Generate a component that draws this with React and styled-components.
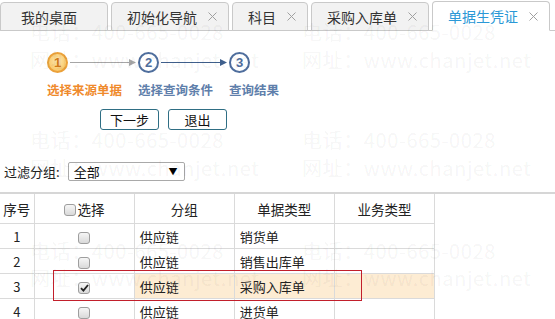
import React from "react";
import styled, { createGlobalStyle } from "styled-components";

const Global = createGlobalStyle`
  html, body { margin: 0; padding: 0; background: #fff; }
  body { font-family: "Noto Sans CJK SC", "Noto Sans", sans-serif; color: #222; }
`;

const Page = styled.div`
  position: relative;
  width: 555px;
  height: 319px;
  overflow: hidden;
  background: #fff;
`;

const TabBar = styled.div`
  display: flex;
  align-items: flex-end;
  gap: 3px;
  height: 30px;
  border-bottom: 1px solid #c9c9c9;
`;

const Tab = styled.div`
  box-sizing: border-box;
  height: ${(p) => (p.$active ? 30 : 29)}px;
  margin-bottom: -1px;
  display: flex;
  align-items: center;
  padding: ${(p) => (p.$plain ? "0 30px 0 20px" : "0 10px 0 15px")};
  border: 1px solid #c9c9c9;
  border-bottom: 1px solid ${(p) => (p.$active ? "#fff" : "#c9c9c9")};
  border-radius: 4px 4px 0 0;
  background: ${(p) => (p.$active ? "#fff" : "#f2f2f2")};
  font-size: 14px;
  color: ${(p) => (p.$active ? "#2b98d6" : "#333")};
  white-space: nowrap;
`;

const Close = styled.svg`
  width: 11px;
  height: 11px;
  margin-left: 10px;
  flex: none;
`;

const Steps = styled.div`
  display: flex;
  padding: 21px 0 0 47px;
`;

const StepItem = styled.div`
  width: 91px;
  display: flex;
  flex-direction: column;
`;

const StepTop = styled.div`
  display: flex;
  align-items: center;
  height: 21px;
`;

const Circle = styled.div`
  box-sizing: border-box;
  width: 21px;
  height: 21px;
  border-radius: 50%;
  flex: none;
  display: flex;
  align-items: center;
  justify-content: center;
  font-family: "Liberation Sans", Arial, sans-serif;
  font-size: 13px;
  font-weight: bold;
  border: 2px solid ${(p) => (p.$current ? "#eba13a" : "#4f6e9d")};
  background: ${(p) =>
    p.$current ? "radial-gradient(circle at 50% 40%, #fde8b0, #f7bd52)" : "#fff"};
  color: ${(p) => (p.$current ? "#d07a18" : "#4f6e9d")};
`;

const Arrow = styled.svg`
  width: 66px;
  height: 9px;
  margin-left: 2px;
  flex: none;
`;

const StepLabel = styled.div`
  margin-top: 8px;
  font-size: 12.5px;
  font-weight: bold;
  line-height: 18px;
  white-space: nowrap;
  color: ${(p) => (p.$current ? "#ef8a2c" : "#5f7fab")};
`;

const Buttons = styled.div`
  display: flex;
  gap: 9px;
  padding: 10px 0 0 100px;
`;

const Button = styled.button`
  box-sizing: border-box;
  width: 59px;
  height: 21px;
  padding: 0;
  border: 1px solid #2f6e84;
  border-radius: 3px;
  background: #fff;
  font-family: "Noto Sans CJK SC", sans-serif;
  font-size: 13px;
  line-height: 19px;
  color: #111;
`;

const FilterRow = styled.div`
  display: flex;
  align-items: center;
  gap: 8px;
  margin-top: 32px;
  padding-left: 4px;
  font-size: 13px;
`;

const Select = styled.div`
  box-sizing: border-box;
  width: 117px;
  height: 19px;
  border: 1px solid #a9a9a9;
  border-radius: 2px;
  display: flex;
  align-items: center;
  justify-content: space-between;
  padding: 0 6px 0 5px;
  font-size: 13px;
  color: #111;
`;

const Caret = styled.span`
  font-size: 9px;
  color: #000;
`;

const TableWrap = styled.div`
  margin-top: 11px;
  border-top: 2px solid #d6d6d6;
`;

const Table = styled.table`
  border-collapse: collapse;
  table-layout: fixed;
  width: 435px;
  font-size: 13px;
`;

const Th = styled.th`
  height: 29px;
  padding: 0;
  border: 1px solid #dadada;
  border-top: none;
  font-weight: normal;
  font-size: 13.5px;
  color: #222;
  text-align: center;
  &:first-child { border-left: none; }
`;

const Td = styled.td`
  height: 24px;
  padding: 0 0 0 ${(p) => (p.$left ? 5 : 0)}px;
  border: 1px solid #dadada;
  text-align: ${(p) => (p.$left ? "left" : "center")};
  background: ${(p) => (p.$hl ? "#fdecd3" : "transparent")};
  color: #222;
  &:first-child { border-left: none; }
`;

const Check = styled.span`
  box-sizing: border-box;
  display: inline-flex;
  align-items: center;
  justify-content: center;
  width: 12px;
  height: 12px;
  border: 1px solid #9e9e9e;
  border-radius: 3px;
  background: linear-gradient(#f6f6f6, #d9d9d9);
  vertical-align: middle;
  margin-right: ${(p) => (p.$withText ? 2 : 0)}px;
`;

const HeadLabel = styled.span`
  vertical-align: middle;
`;

const Watermark = styled.div`
  position: absolute;
  left: ${(p) => p.$x}px;
  top: ${(p) => p.$y}px;
  font-size: 20px;
  line-height: 26px;
  letter-spacing: 0.6px;
  color: rgba(0, 0, 0, 0.055);
  white-space: nowrap;
  pointer-events: none;
`;

const Annotation = styled.div`
  position: absolute;
  left: 53px;
  top: 270px;
  width: 307px;
  height: 29px;
  border: 1px solid #c21f2b;
  pointer-events: none;
`;

const tabs = [
  { t: "我的桌面", plain: true },
  { t: "初始化导航" },
  { t: "科目" },
  { t: "采购入库单" },
  { t: "单据生凭证", active: true },
];

const rows = [
  { n: 1, g: "供应链", d: "销货单" },
  { n: 2, g: "供应链", d: "销售出库单" },
  { n: 3, g: "供应链", d: "采购入库单", checked: true },
  { n: 4, g: "供应链", d: "进货单" },
];

const steps = [
  { n: 1, label: "选择来源单据", current: true, arrow: "#a6a6a6" },
  { n: 2, label: "选择查询条件", arrow: "#3f5f8c" },
  { n: 3, label: "查询结果" },
];

function CloseIcon() {
  return (
    <Close viewBox="0 0 11 11">
      <path d="M1.5 1.5 L9.5 9.5 M9.5 1.5 L1.5 9.5" stroke="#a0a0a0" strokeWidth="1" />
    </Close>
  );
}

function CheckMark() {
  return (
    <svg width="9" height="8" viewBox="0 0 9 8">
      <path d="M1 4.2 L3.4 6.6 L8 1" fill="none" stroke="#222" strokeWidth="1.8" />
    </svg>
  );
}

export default function App() {
  const marks = [
    [30, 19, "电话：400-665-0028"],
    [30, 47, "网址：www.chanjet.net"],
    [302, 19, "电话：400-665-0028"],
    [302, 47, "网址：www.chanjet.net"],
    [30, 127, "电话：400-665-0028"],
    [30, 155, "网址：www.chanjet.net"],
    [302, 127, "电话：400-665-0028"],
    [302, 155, "网址：www.chanjet.net"],
    [30, 238, "电话：400-665-0028"],
    [30, 265, "网址：www.chanjet.net"],
    [302, 238, "电话：400-665-0028"],
    [302, 265, "网址：www.chanjet.net"],
  ];
  return (
    <Page>
      <Global />
      <TabBar>
        {tabs.map((tab) => (
          <Tab key={tab.t} $active={tab.active} $plain={tab.plain}>
            {tab.t}
            {!tab.plain && <CloseIcon />}
          </Tab>
        ))}
      </TabBar>

      <Steps>
        {steps.map((s) => (
          <StepItem key={s.n}>
            <StepTop>
              <Circle $current={s.current}>{s.n}</Circle>
              {s.arrow && (
                <Arrow viewBox="0 0 66 9">
                  <line x1="0" y1="4.5" x2="60" y2="4.5" stroke={s.arrow} strokeWidth="1.2" />
                  <path d="M59 1 L66 4.5 L59 8 Z" fill={s.arrow} />
                </Arrow>
              )}
            </StepTop>
            <StepLabel $current={s.current}>{s.label}</StepLabel>
          </StepItem>
        ))}
      </Steps>

      <Buttons>
        <Button>下一步</Button>
        <Button>退出</Button>
      </Buttons>

      <FilterRow>
        <span>过滤分组:</span>
        <Select>
          <span>全部</span>
          <Caret>▼</Caret>
        </Select>
      </FilterRow>

      <TableWrap>
        <Table>
          <colgroup>
            <col style={{ width: 34 }} />
            <col style={{ width: 100 }} />
            <col style={{ width: 100 }} />
            <col style={{ width: 100 }} />
            <col style={{ width: 100 }} />
          </colgroup>
          <thead>
            <tr>
              <Th>序号</Th>
              <Th>
                <Check $withText />
                <HeadLabel>选择</HeadLabel>
              </Th>
              <Th>分组</Th>
              <Th>单据类型</Th>
              <Th>业务类型</Th>
            </tr>
          </thead>
          <tbody>
            {rows.map((r) => (
              <tr key={r.n}>
                <Td>{r.n}</Td>
                <Td>
                  <Check>{r.checked && <CheckMark />}</Check>
                </Td>
                <Td $left $hl={r.checked}>{r.g}</Td>
                <Td $left $hl={r.checked}>{r.d}</Td>
                <Td $hl={r.checked} />
              </tr>
            ))}
          </tbody>
        </Table>
      </TableWrap>

      {marks.map(([x, y, t], i) => (
        <Watermark key={i} $x={x} $y={y}>{t}</Watermark>
      ))}
      <Annotation />
    </Page>
  );
}
